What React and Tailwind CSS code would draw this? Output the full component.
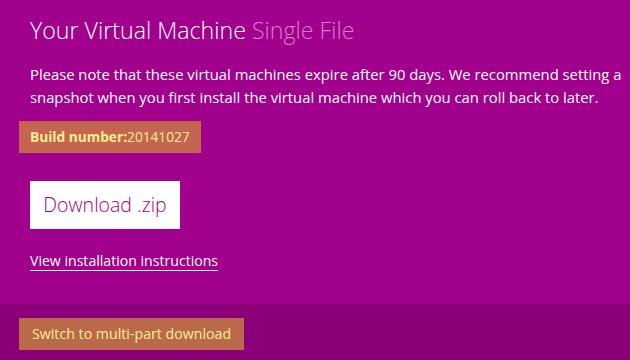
export default function App() {
  return (
    <div className="w-[630px] h-[360px] bg-[#a0008b] flex flex-col overflow-hidden" style={{ fontFamily: '"Open Sans", "Noto Sans", sans-serif' }}>
      <div className="flex-1 flex flex-col pl-[30px] pt-[14px]">
        <h1 className="text-[23.2px] font-light text-white leading-[32px]">
          Your Virtual Machine <span className="text-[#d77ccb]">Single File</span>
        </h1>
        <p className="mt-[17px] text-[14.8px] leading-[23px] text-white whitespace-nowrap">
          Please note that these virtual machines expire after 90 days. We recommend setting a<br />
          snapshot when you first install the virtual machine which you can roll back to later.
        </p>
        <div className="mt-[12px] -ml-[11px] self-start bg-[#c46552] h-[32px] w-[182px] flex items-center pl-[11px] text-[13.7px] text-[#fff08c]">
          <span className="font-bold">Build number:</span>20141027
        </div>
        <div className="mt-[28px] self-start bg-white w-[150px] h-[48px] flex items-center justify-center text-[19.5px] font-light text-[#a0008b]">
          Download .zip
        </div>
        <a href="#" className="mt-[22px] self-start text-[14.1px] text-white underline underline-offset-[4px] leading-[20px]">
          View installation instructions
        </a>
      </div>
      <div className="h-[56px] bg-[#8b0078] pl-[19px] pt-[14px]">
        <div className="bg-[#ba6a4b] w-[225px] h-[32px] flex items-center pl-[13px] text-[14.2px] text-[#fff08c]">
          Switch to multi-part download
        </div>
      </div>
    </div>
  );
}
